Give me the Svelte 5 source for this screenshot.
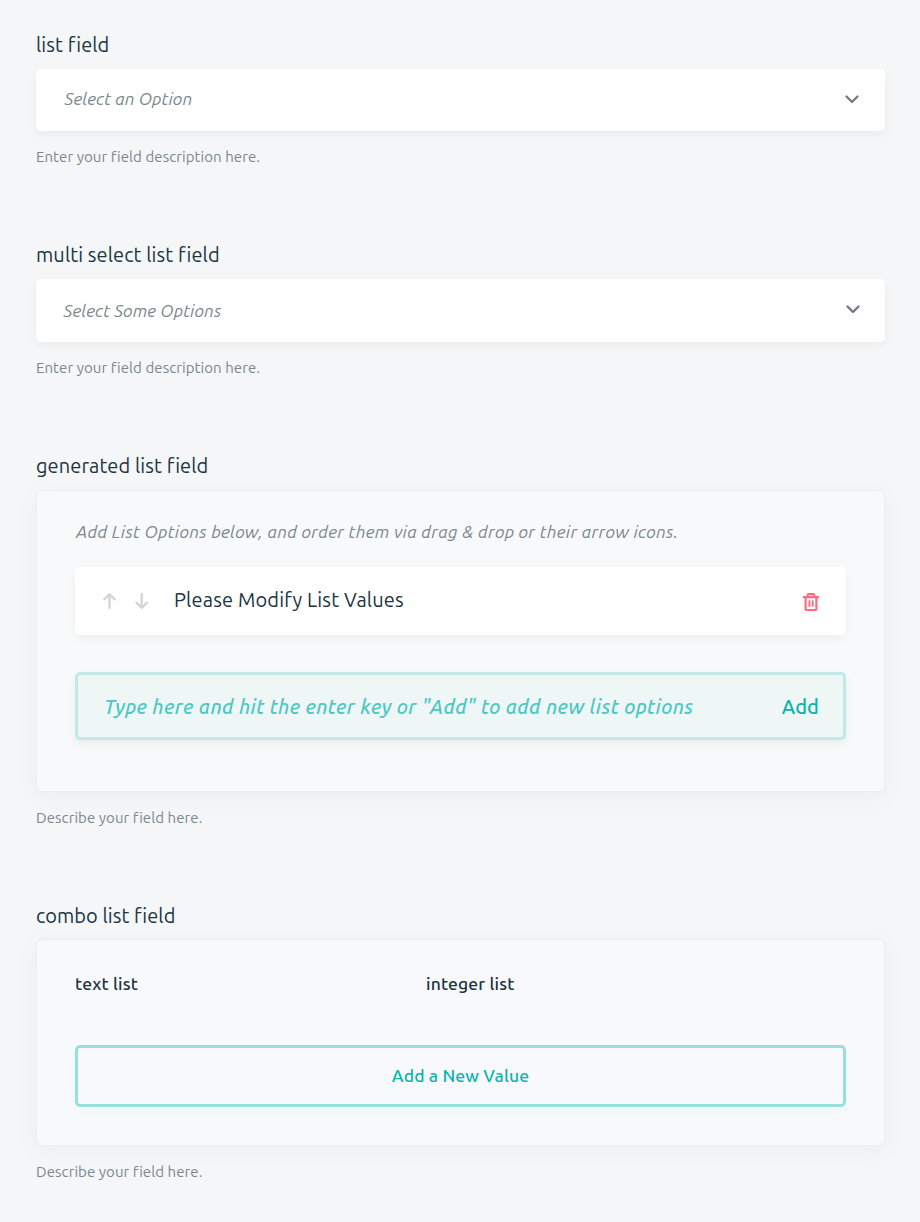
<script>
  const chevron = 'M1.5 1.5 L7 7 L12.5 1.5';
</script>

<main>
  <section class="field">
    <h2>list field</h2>
    <div class="select single">
      <span class="ph">Select an Option</span>
      <svg width="14" height="9" viewBox="0 0 14 9"><path d={chevron} /></svg>
    </div>
    <p class="desc">Enter your field description here.</p>
  </section>

  <section class="field">
    <h2>multi select list field</h2>
    <div class="select multi">
      <span class="ph">Select Some Options</span>
      <svg width="14" height="9" viewBox="0 0 14 9"><path d={chevron} /></svg>
    </div>
    <p class="desc">Enter your field description here.</p>
  </section>

  <section class="field generated">
    <h2>generated list field</h2>
    <div class="panel">
      <p class="hint">Add List Options below, and order them via drag &amp; drop or their arrow icons.</p>
      <div class="row">
        <svg class="arrow" width="14" height="18" viewBox="0 0 14 18"><path d="M6.5 16V2.5M1.3 7.3 6.5 2.2l5.2 5.1" /></svg>
        <svg class="arrow down" width="14" height="18" viewBox="0 0 14 18"><path d="M6.7 2v13.5M1.5 10.7 6.7 15.8l5.2-5.1" /></svg>
        <span class="value">Please Modify List Values</span>
        <svg class="trash" width="16" height="18" viewBox="0 0 16 18">
          <path d="M0 4.2h16M2.6 4.5v11.4q0 1.1 1.1 1.1h8.6q1.1 0 1.1-1.1V4.5M4.6 4V2.3q0-1.2 1.2-1.2h4.4q1.2 0 1.2 1.2V4" />
          <path class="thin" d="M6.4 7.2v6.6M9.6 7.2v6.6" />
        </svg>
      </div>
      <div class="entry">
        <span class="type">Type here and hit the enter key or "Add" to add new list options</span>
        <span class="add">Add</span>
      </div>
    </div>
    <p class="desc">Describe your field here.</p>
  </section>

  <section class="field">
    <h2 class="low">combo list field</h2>
    <div class="panel combo">
      <div class="columns"><span>text list</span><span>integer list</span></div>
      <div class="new"><span>Add a New Value</span></div>
    </div>
    <p class="desc">Describe your field here.</p>
  </section>
</main>

<style>
  :global(body) { background: #f4f6f8; }
  main {
    box-sizing: border-box;
    width: 920px;
    height: 1222px;
    padding: 33px 35px 0 36px;
    overflow: hidden;
    background: #f4f6f8;
    color: #20343f;
    font-family: Ubuntu, "Noto Sans", sans-serif;
    white-space: nowrap;
  }
  .field { margin-bottom: 76px; }
  .generated { margin-bottom: 75px; }
  h2 { margin: 0 0 12px; font-size: 20px; font-weight: 400; line-height: 24px; letter-spacing: 0.1px; }
  .low { margin-bottom: 10px; line-height: 26px; letter-spacing: 0.05px; }
  .desc { margin: 16px 0 0; color: #7b888d; font-size: 15px; line-height: 20px; letter-spacing: 0.07px; }
  .select {
    box-sizing: border-box;
    display: flex;
    align-items: center;
    justify-content: space-between;
    background: #fff;
    border-radius: 5px;
    box-shadow: 0 4px 10px rgba(0, 0, 0, 0.045);
  }
  .single { height: 62px; padding: 0 26px 2px 28.5px; }
  .multi { height: 63px; padding: 0 25px 0 27.5px; }
  .multi svg { margin-top: -2px; }
  .single svg { margin-top: 1px; }
  .ph, .hint { color: #7b888d; font-size: 17.5px; font-style: italic; line-height: 24px; letter-spacing: 0.07px; }
  svg { display: block; flex: none; overflow: visible; }
  path { fill: none; stroke: #727c85; stroke-width: 2.4; stroke-linecap: round; stroke-linejoin: round; }
  .panel {
    box-sizing: border-box;
    height: 302px;
    padding: 29px 38px 0;
    border: 1px solid #eceef0;
    border-radius: 6px;
    background: #f8f9fb;
    box-shadow: 0 5px 25px rgba(0, 0, 0, 0.04);
  }
  .hint { margin: 0 0 23px; padding-left: 1px; letter-spacing: 0.27px; }
  .row {
    box-sizing: border-box;
    display: flex;
    align-items: center;
    height: 68px;
    padding: 0 27px 0 28px;
    background: #fff;
    border-radius: 5px;
    box-shadow: 0 4px 10px rgba(0, 0, 0, 0.045);
  }
  .arrow path { stroke: #d2d5d9; }
  .down { margin-left: 18px; }
  .value { margin-left: 25px; font-size: 20px; line-height: 28px; padding-bottom: 2px; letter-spacing: 0.16px; }
  .trash { margin-left: auto; margin-top: 2px; }
  .trash path { stroke: #ff6b7f; stroke-width: 2.2; stroke-linecap: butt; }
  .trash .thin { stroke-width: 1.9; }
  .entry {
    box-sizing: border-box;
    display: flex;
    align-items: center;
    justify-content: space-between;
    height: 68px;
    margin-top: 37px;
    padding: 0 24px 0 26px;
    border: 3px solid #c0eae7;
    border-radius: 5px;
    background: #eff7f6;
    box-shadow: 0 4px 10px rgba(0, 0, 0, 0.05);
    font-size: 20px;
    font-weight: 500;
  }
  .type { color: #4bc8c4; font-style: italic; letter-spacing: 0.37px; }
  .add { color: #0ab3ae; letter-spacing: 0.1px; }
  .combo { height: 207px; padding-top: 32px; }
  .columns { display: grid; grid-template-columns: 351px 1fr; font-size: 17.5px; font-weight: 500; line-height: 24px; letter-spacing: 0.14px; }
  .new {
    box-sizing: border-box;
    display: flex;
    align-items: center;
    justify-content: center;
    height: 62px;
    margin-top: 49px;
    padding-bottom: 2px;
    border: 3px solid #96dfdb;
    border-radius: 5px;
    box-shadow: 0 4px 10px rgba(10, 179, 174, 0.045);
    color: #0ab3ae;
    font-size: 17.5px;
    font-weight: 500;
    letter-spacing: 0.14px;
  }
</style>
